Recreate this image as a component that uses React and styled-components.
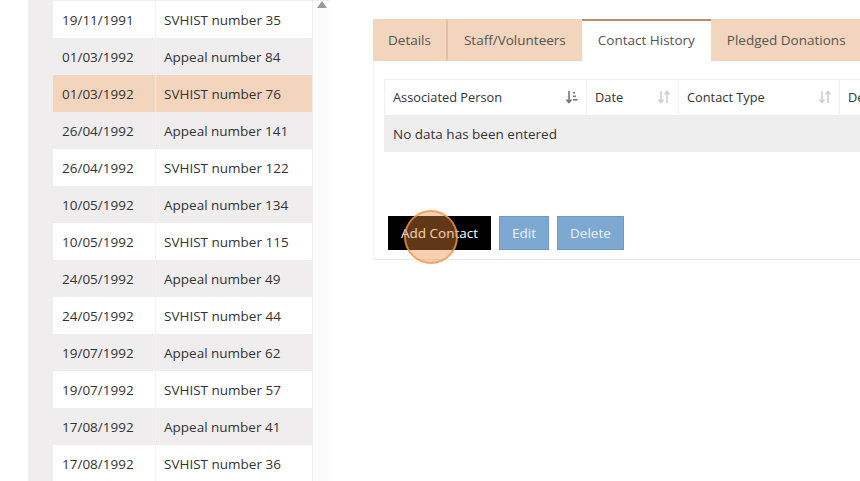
import React from "react";
import styled, { createGlobalStyle } from "styled-components";

const GlobalStyle = createGlobalStyle`
  html, body {
    margin: 0;
    padding: 0;
    background: #ffffff;
    overflow: hidden;
  }
  body {
    font-family: "Open Sans", "Liberation Sans", sans-serif;
    font-size: 13.5px;
    color: #333333;
  }
`;

const rows = [
  ["19/11/1991", "SVHIST number 35"],
  ["01/03/1992", "Appeal number 84"],
  ["01/03/1992", "SVHIST number 76"],
  ["26/04/1992", "Appeal number 141"],
  ["26/04/1992", "SVHIST number 122"],
  ["10/05/1992", "Appeal number 134"],
  ["10/05/1992", "SVHIST number 115"],
  ["24/05/1992", "Appeal number 49"],
  ["24/05/1992", "SVHIST number 44"],
  ["19/07/1992", "Appeal number 62"],
  ["19/07/1992", "SVHIST number 57"],
  ["17/08/1992", "Appeal number 41"],
  ["17/08/1992", "SVHIST number 36"],
];

const Page = styled.div`
  display: flex;
  width: 860px;
  height: 481px;
  overflow: hidden;
`;

const LeftGap = styled.div`
  width: 28px;
  flex-shrink: 0;
`;

const ListPanel = styled.div`
  display: flex;
  flex-shrink: 0;
  background: #efeded;
  padding-left: 25px;
  padding-top: 1px;
`;

const ListTable = styled.div`
  width: 259px;
  display: flex;
  flex-direction: column;
`;

const ListRow = styled.div`
  display: grid;
  grid-template-columns: 102px 157px;
  height: 37px;
  flex-shrink: 0;
  background: ${(p) => (p.$selected ? "#f3d5be" : p.$even ? "#efeded" : "#ffffff")};
`;

const ListCell = styled.div`
  display: flex;
  align-items: center;
  padding-left: ${(p) => (p.$first ? "9px" : "8px")};
  border-left: ${(p) => (p.$first ? "none" : "1px solid #f3f1f1")};
  white-space: nowrap;
  font-size: 13.5px;
`;

const Scrollbar = styled.div`
  width: 16px;
  background: #fbfbfb;
  border-left: 1px solid #f1f0f0;
  position: relative;
`;

const UpArrow = styled.div`
  position: absolute;
  top: 0px;
  left: 4px;
  width: 0;
  height: 0;
  border-left: 5px solid transparent;
  border-right: 5px solid transparent;
  border-bottom: 7px solid #9a9a9a;
`;

const Main = styled.div`
  margin-left: 44px;
  padding-top: 19px;
  flex: 1;
  min-width: 0;
`;

const Tabs = styled.div`
  display: flex;
  height: 42px;
  background: #f2d5bd;
  width: 600px;
`;

const Tab = styled.div`
  display: flex;
  align-items: center;
  padding: 0 ${(p) => p.$pad || 16}px;
  height: 42px;
  box-sizing: border-box;
  white-space: nowrap;
  color: #555555;
  font-size: 13.5px;
  background: ${(p) => (p.$active ? "#ffffff" : "transparent")};
  box-shadow: ${(p) => (p.$active ? "inset 0 2px 0 #b8926a" : "none")};
  border-right: ${(p) => (p.$divider ? "2px solid #e3bf9f" : "none")};
`;

const Panel = styled.div`
  width: 600px;
  height: 199px;
  box-sizing: border-box;
  border-left: 1px solid #f3f3f3;
  border-bottom: 1px solid #e8e8e8;
  padding: 18px 0 0 10px;
`;

const DataTable = styled.div`
  width: 600px;
`;

const HeaderRow = styled.div`
  display: grid;
  grid-template-columns: 202px 92px 161px 1fr;
  height: 35px;
  border-top: 1px solid #f1f1f1;
  border-left: 1px solid #f1f1f1;
`;

const HeaderCell = styled.div`
  display: flex;
  align-items: center;
  justify-content: space-between;
  padding: 0 8px 2px 8px;
  border-right: 1px solid #f1f1f1;
  font-size: 12.8px;
  color: #333333;
  white-space: nowrap;
  overflow: hidden;
`;

const EmptyRow = styled.div`
  height: 37px;
  background: #efeeee;
  display: flex;
  align-items: center;
  padding-left: 9px;
  font-size: 13.5px;
`;

const ButtonBar = styled.div`
  display: flex;
  gap: 8px;
  margin-top: 64px;
  margin-left: 4px;
  position: relative;
`;

const Button = styled.div`
  height: 34px;
  display: flex;
  align-items: center;
  padding: 0 ${(p) => p.$pad}px;
  background: ${(p) => (p.$primary ? "#000000" : "#7ca8d1")};
  color: ${(p) => (p.$primary ? "#ffffff" : "#eef4fa")};
  border: 1px solid ${(p) => (p.$primary ? "#000000" : "#6f9cc6")};
  box-sizing: border-box;
  font-size: 13.5px;
  white-space: nowrap;
`;

const ClickMark = styled.div`
  position: absolute;
  left: 16px;
  top: -6px;
  width: 50px;
  height: 50px;
  border-radius: 50%;
  background: rgba(240, 140, 60, 0.4);
  border: 2px solid rgba(236, 150, 80, 0.75);
  pointer-events: none;
`;

const SortIcon = ({ active }) => (
  <svg width="12" height="14" viewBox="0 0 12 14">
    <path d="M3 1 V12 M0.5 9.5 L3 12.5 L5.5 9.5" stroke={active ? "#777" : "#d0d0d0"} strokeWidth="1.6" fill="none" />
    {active ? (
      <g fill="#777">
        <rect x="7" y="2" width="2" height="1.6" />
        <rect x="7" y="5.5" width="3" height="1.6" />
        <rect x="7" y="9" width="4.5" height="1.6" />
      </g>
    ) : (
      <path d="M9 13 V2 M6.5 4.5 L9 1.5 L11.5 4.5" stroke="#d0d0d0" strokeWidth="1.6" fill="none" />
    )}
  </svg>
);

export default function App() {
  return (
    <>
      <GlobalStyle />
      <Page>
        <LeftGap />
        <ListPanel>
          <ListTable>
            {rows.map(([d, n], i) => (
              <ListRow key={i} $even={i % 2 === 1} $selected={i === 2}>
                <ListCell $first>{d}</ListCell>
                <ListCell>{n}</ListCell>
              </ListRow>
            ))}
          </ListTable>
          <Scrollbar>
            <UpArrow />
          </Scrollbar>
        </ListPanel>
        <Main>
          <Tabs>
            <Tab $divider $pad={15}>Details</Tab>
            <Tab $pad={16}>Staff/Volunteers</Tab>
            <Tab $active $pad={16}>Contact History</Tab>
            <Tab $pad={16}>Pledged Donations</Tab>
          </Tabs>
          <Panel>
            <DataTable>
              <HeaderRow>
                <HeaderCell>Associated Person <SortIcon active /></HeaderCell>
                <HeaderCell>Date <SortIcon /></HeaderCell>
                <HeaderCell>Contact Type <SortIcon /></HeaderCell>
                <HeaderCell>Description</HeaderCell>
              </HeaderRow>
              <EmptyRow>No data has been entered</EmptyRow>
            </DataTable>
            <ButtonBar>
              <Button $primary $pad={12}>Add Contact</Button>
              <Button $pad={12}>Edit</Button>
              <Button $pad={12}>Delete</Button>
              <ClickMark />
            </ButtonBar>
          </Panel>
        </Main>
      </Page>
    </>
  );
}
